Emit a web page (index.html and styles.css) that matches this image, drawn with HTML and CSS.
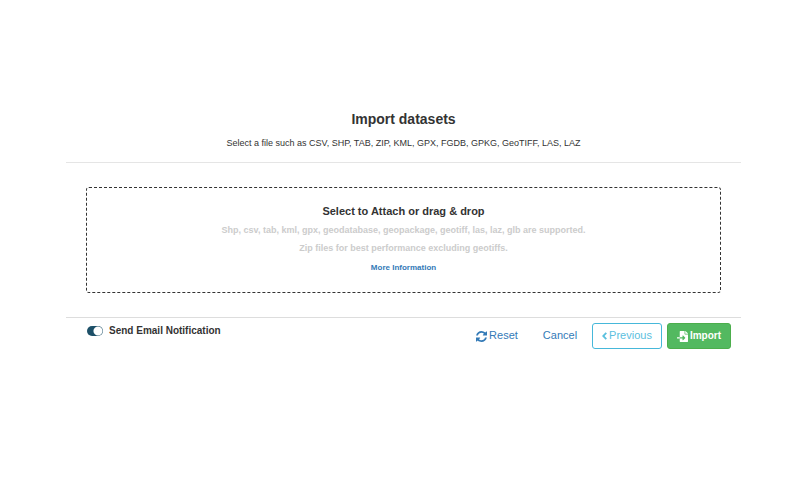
FILE: index.html
```html
<!DOCTYPE html>
<html lang="en">
<head>
    <meta charset="UTF-8">
    <meta name="viewport" content="width=device-width, initial-scale=1.0">
    <title>Import datasets</title>
    <link rel="stylesheet" href="styles.css">
</head>
<body>
    <main class="dialog">
        <header class="dialog-header">
            <h1>Import datasets</h1>
            <p>Select a file such as CSV, SHP, TAB, ZIP, KML, GPX, FGDB, GPKG, GeoTIFF, LAS, LAZ</p>
        </header>

        <div class="dialog-body">
            <div class="dropzone">
                <h2>Select to Attach or drag &amp; drop</h2>
                <p>Shp, csv, tab, kml, gpx, geodatabase, geopackage, geotiff, las, laz, glb are supported.</p>
                <p>Zip files for best performance excluding geotiffs.</p>
                <a href="#" class="more">More Information</a>
            </div>
        </div>

        <footer class="dialog-footer">
            <label class="notify">
                <input type="checkbox" class="switch" checked>
                <span>Send Email Notification</span>
            </label>
            <div class="actions">
                <button type="button" class="btn btn-link">
                    <svg class="icon" viewBox="0 0 1536 1536" aria-hidden="true"><path fill="currentColor" d="M1511 928q0 5-1 7-64 268-268 434.5t-478 166.5q-146 0-282.5-55t-243.5-157l-129 129q-19 19-45 19t-45-19-19-45v-448q0-26 19-45t45-19h448q26 0 45 19t19 45-19 45l-137 137q71 66 161 102t187 36q134 0 250-65t186-179q11-17 53-117 8-23 30-23h192q13 0 22.500 9.500t9.500 22.500zm25-800v448q0 26-19 45t-45 19h-448q-26 0-45-19t-19-45 19-45l138-138q-148-137-349-137-134 0-250 65t-186 179q-11 17-53 117-8 23-30 23h-199q-13 0-22.500-9.500t-9.500-22.500v-7q65-268 270-434.500t480-166.500q146 0 284 55.500t245 156.500l130-129q19-19 45-19t45 19 19 45z"/></svg>
                    <span>Reset</span>
                </button>
                <button type="button" class="btn btn-link"><span>Cancel</span></button>
                <button type="button" class="btn btn-outline">
                    <svg class="icon icon-chevron" viewBox="0 0 5 8" aria-hidden="true"><path fill="none" stroke="currentColor" stroke-width="1.8" d="M4.300 .8 1.200 4l3.100 3.200"/></svg>
                    <span>Previous</span>
                </button>
                <button type="button" class="btn btn-success">
                    <svg class="icon" viewBox="0 0 512 512" aria-hidden="true"><path fill="currentColor" d="M16 288c-8.800 0-16 7.200-16 16v32c0 8.800 7.200 16 16 16h112v-64zm489-183L407.100 7c-4.500-4.500-10.600-7-17-7H384v128h128v-6.100c0-6.300-2.500-12.400-7-16.900zm-153 31V0H152c-13.300 0-24 10.700-24 24v264h128v-65.200c0-14.300 17.300-21.400 27.400-11.300L379 308c6.600 6.700 6.600 17.400 0 24l-95.700 96.400c-10.100 10.100-27.400 3-27.400-11.300V352H128v136c0 13.300 10.700 24 24 24h336c13.300 0 24-10.700 24-24V160H376c-13.200 0-24-10.800-24-24z"/></svg>
                    <span>Import</span>
                </button>
            </div>
        </footer>
    </main>
</body>
</html>
```
FILE: styles.css
```css
body {
    margin: 0;
    background: #fff;
    color: #333;
    font-family: "Liberation Sans", Arial, sans-serif;
    font-size: 11px;
}
.dialog {
    margin: 108px 63px 0 66px;
}
.dialog-header {
    padding-bottom: 12px;
    border-bottom: 1px solid #e5e5e5;
    text-align: center;
}
.dialog-header h1 {
    margin: 0;
    font-size: 14px;
    line-height: 22px;
}
.dialog-header p {
    margin: 6px 0 0;
    font-size: 9px;
    line-height: 14px;
}
.dialog-body {
    padding: 24px 20px;
}
.dropzone {
    padding: 13px 16px;
    border: 1px dashed #333;
    border-radius: 3px;
    text-align: center;
    font-weight: bold;
}
.dropzone h2 {
    margin: 0;
    font-size: 11px;
    line-height: 20px;
}
.dropzone p {
    margin: 0;
    color: #ccc;
    font-size: 9px;
    line-height: 18px;
}
.more {
    display: block;
    color: #337ab7;
    font-size: 8px;
    line-height: 22px;
    text-decoration: none;
}
.dialog-footer {
    display: flex;
    justify-content: space-between;
    align-items: flex-start;
    padding: 5px 10px 0 21px;
    border-top: 1px solid #ddd;
}
.notify {
    display: flex;
    align-items: center;
    gap: 6px;
    font-size: 10px;
    font-weight: bold;
    line-height: 16px;
}
.btn span {
    padding-bottom: 2px;
}
.switch {
    appearance: none;
    width: 16px;
    height: 10px;
    margin: 0;
    border-radius: 5px;
    background: radial-gradient(circle at 11px 5px, #fff 4px, #1d5068 5px);
}
.actions {
    display: flex;
    gap: 5px;
}
.btn {
    display: flex;
    align-items: center;
    gap: 2px;
    height: 26px;
    padding: 0 9px;
    border: 1px solid transparent;
    border-radius: 3px;
    background: none;
    font-family: inherit;
    font-size: 11px;
    cursor: pointer;
}
.btn-link {
    color: #337ab7;
}
.btn-outline {
    border-color: #46b8da;
    color: #5bc0de;
}
.btn-success {
    border-color: #4cae4c;
    background: #53b960;
    color: #fff;
    font-size: 10px;
    font-weight: bold;
}
.icon {
    width: 11px;
    height: 11px;
}
.icon-chevron {
    width: 5px;
    height: 8px;
}
```
